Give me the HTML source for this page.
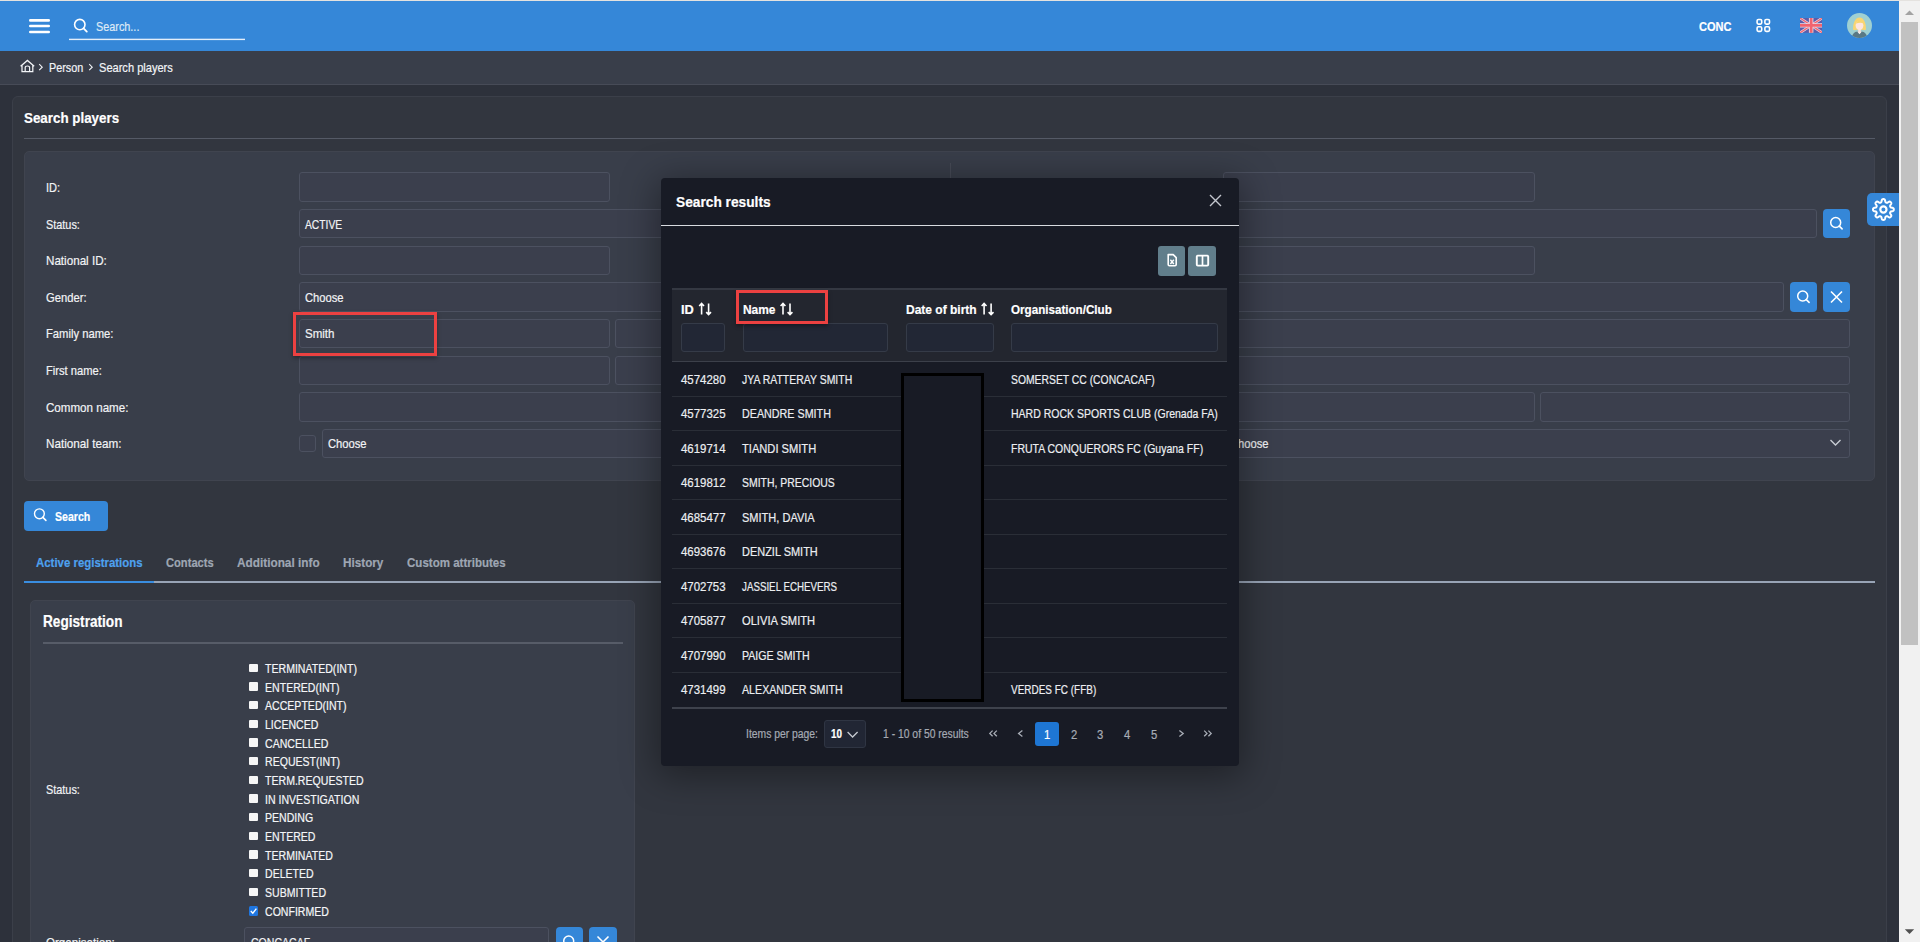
<!DOCTYPE html>
<html><head><meta charset="utf-8">
<style>
*{box-sizing:border-box;margin:0;padding:0}
html,body{width:1920px;height:942px;overflow:hidden;background:#2d313b;font-family:"Liberation Sans",sans-serif;color:#e6e8ec}
.a{position:absolute}
.t{position:absolute;white-space:nowrap;line-height:20px;transform-origin:0 0;-webkit-text-stroke:0.2px currentColor}
svg{position:absolute;overflow:visible}
.inp{position:absolute;height:29px;background:#3b3f4d;border:1px solid #4c5160;border-radius:3px}
.fin{position:absolute;background:#222735;border:1px solid #353b48;border-radius:3px}
.btn{position:absolute;background:#3587d8;border-radius:4px}
</style></head><body>
<div class="a" style="left:0px;top:0px;width:1920px;height:1px;background:#e4e2df"></div>
<div class="a" style="left:0px;top:1px;width:1899px;height:50px;background:#3587d8"></div>
<div class="a" style="left:0px;top:51px;width:1899px;height:34px;background:#393e4a;border-bottom:1px solid #474b57"></div>
<div class="a" style="left:12px;top:96px;width:1875px;height:900px;background:#32363f;border:1px solid #3b3f49;border-radius:6px"></div>
<div class="a" style="left:24px;top:138px;width:1851px;height:1px;background:#555a66"></div>
<div class="a" style="left:24px;top:151px;width:1851px;height:330px;background:#393e4a;border:1px solid #40444f;border-radius:5px"></div>
<div class="a" style="left:950px;top:163px;width:1px;height:300px;background:#474b57"></div>
<svg style="left:0;top:0" width="1" height="1"><g stroke="#fff" stroke-width="2.6" stroke-linecap="round"><line x1="30.3" y1="20.4" x2="48.7" y2="20.4"/><line x1="30.3" y1="26" x2="48.7" y2="26"/><line x1="30.3" y1="32" x2="48.7" y2="32"/></g><circle cx="79.8" cy="24.6" r="5.2" fill="none" stroke="#fff" stroke-width="1.6"/><line x1="83.6" y1="28.4" x2="86.8" y2="31.6" stroke="#fff" stroke-width="1.8" stroke-linecap="round"/><rect x="69" y="38.7" width="176" height="1.4" fill="#e3eefa"/><g fill="none" stroke="#fff" stroke-width="1.6"><rect x="1757.1" y="19.5" width="4.6" height="4.6" rx="1.3"/><rect x="1764.9" y="19.5" width="4.6" height="4.6" rx="1.3"/><rect x="1757.1" y="26.8" width="4.6" height="4.6" rx="1.3"/><rect x="1764.9" y="26.8" width="4.6" height="4.6" rx="1.3"/></g></svg>
<div class="t" style="left:95.5px;top:17.10px;font-size:13px;color:#dde9f6;transform:scaleX(0.8341);">Search...</div>
<div class="t" style="left:1698.8px;top:17.20px;font-size:13px;font-weight:700;color:#ffffff;transform:scaleX(0.8490);">CONC</div>
<svg style="left:1800.2px;top:18.1px;overflow:hidden" width="22.3" height="14.8" viewBox="0 0 60 40" preserveAspectRatio="none"><rect width="60" height="40" fill="#5a5daa"/><path d="M0,0 L60,40 M60,0 L0,40" stroke="#e9d9e6" stroke-width="7"/><path d="M0,0 L60,40 M60,0 L0,40" stroke="#f0646f" stroke-width="3.4"/><path d="M30,0 V40 M0,20 H60" stroke="#eedde6" stroke-width="12"/><path d="M30,0 V40 M0,20 H60" stroke="#f2636e" stroke-width="7.5"/></svg>
<svg style="left:1847px;top:13px;overflow:hidden" width="25" height="25" viewBox="0 0 25 25"><circle cx="12.5" cy="12.5" r="12.5" fill="#9fd0d2"/><defs><clipPath id="av"><circle cx="12.5" cy="12.5" r="12.5"/></clipPath></defs><g clip-path="url(#av)"><path d="M4.6,26 Q5,19.2 10.5,18.6 L14.5,18.6 Q20,19.2 20.4,26 Z" fill="#5a7985"/><path d="M10.2,18.6 L12.5,21.2 L14.8,18.6 Z" fill="#f7f7f7"/><rect x="11.2" y="15.5" width="2.6" height="4" fill="#fbe0da"/><path d="M6,16.6 Q5.8,12 7.2,9 Q9.2,4.6 12.5,4.6 Q15.8,4.6 17.8,9 Q19.2,12 19,16.6 Q17.6,17.8 16.2,16.8 L8.8,16.8 Q7.4,17.8 6,16.6 Z" fill="#f8d572"/><ellipse cx="12.5" cy="12.6" rx="3.9" ry="4.6" fill="#fde5e0"/><path d="M8.4,10.8 Q10,7.2 13.6,7.4 Q16,8 16.8,10.8 Q14,8.8 8.4,10.8 Z" fill="#f8d572"/></g></svg>
<svg style="left:0;top:0" width="1" height="1"><path d="M20.6,66.2 L27.4,60.4 L34.2,66.2 M22,65.2 V71.7 H32.8 V65.2" fill="none" stroke="#f2f4f7" stroke-width="1.25" stroke-linejoin="miter"/><path d="M25.2,71.7 V67.6 Q25.2,66 27.4,66 Q29.6,66 29.6,67.6 V71.7" fill="none" stroke="#f2f4f7" stroke-width="1.2"/><path d="M39.2,64.2 L42.2,67.2 L39.2,70.2" fill="none" stroke="#eef0f4" stroke-width="1.15"/><path d="M89.2,64.2 L92.2,67.2 L89.2,70.2" fill="none" stroke="#eef0f4" stroke-width="1.15"/></svg>
<div class="t" style="left:49.0px;top:58.30px;font-size:13px;color:#f2f4f7;transform:scaleX(0.8325);">Person</div>
<div class="t" style="left:98.7px;top:58.30px;font-size:13px;color:#f2f4f7;transform:scaleX(0.8510);">Search players</div>
<div class="t" style="left:24.3px;top:108.20px;font-size:15px;font-weight:700;color:#ffffff;transform:scaleX(0.8909);">Search players</div>
<div class="t" style="left:45.8px;top:177.90px;font-size:13px;color:#f2f3f5;transform:scaleX(0.8481);">ID:</div>
<div class="t" style="left:45.8px;top:214.80px;font-size:13px;color:#f2f3f5;transform:scaleX(0.8377);">Status:</div>
<div class="t" style="left:45.8px;top:251.00px;font-size:13px;color:#f2f3f5;transform:scaleX(0.8951);">National ID:</div>
<div class="t" style="left:45.8px;top:287.80px;font-size:13px;color:#f2f3f5;transform:scaleX(0.8620);">Gender:</div>
<div class="t" style="left:45.8px;top:324.00px;font-size:13px;color:#f2f3f5;transform:scaleX(0.8638);">Family name:</div>
<div class="t" style="left:45.8px;top:360.80px;font-size:13px;color:#f2f3f5;transform:scaleX(0.8583);">First name:</div>
<div class="t" style="left:45.8px;top:397.50px;font-size:13px;color:#f2f3f5;transform:scaleX(0.8910);">Common name:</div>
<div class="t" style="left:45.8px;top:434.20px;font-size:13px;color:#f2f3f5;transform:scaleX(0.8995);">National team:</div>
<div class="inp" style="left:299px;top:172px;width:311px;height:30px"></div>
<div class="inp" style="left:1222.5px;top:172px;width:312.0px;height:30px"></div>
<div class="inp" style="left:299px;top:209px;width:1518px;height:29px"></div>
<div class="inp" style="left:299px;top:245.5px;width:311px;height:29.0px"></div>
<div class="inp" style="left:1222.5px;top:245.5px;width:312.0px;height:29.0px"></div>
<div class="inp" style="left:299px;top:282px;width:1485px;height:29.5px"></div>
<div class="inp" style="left:299px;top:319px;width:311px;height:29px"></div>
<div class="inp" style="left:615px;top:319px;width:311px;height:29px"></div>
<div class="inp" style="left:1222.5px;top:319px;width:627.5px;height:29px"></div>
<div class="inp" style="left:299px;top:355.5px;width:311px;height:29.0px"></div>
<div class="inp" style="left:615px;top:355.5px;width:311px;height:29.0px"></div>
<div class="inp" style="left:1222.5px;top:355.5px;width:627.5px;height:29.0px"></div>
<div class="inp" style="left:299px;top:392px;width:627px;height:29.5px"></div>
<div class="inp" style="left:1222.5px;top:392px;width:312.0px;height:29.5px"></div>
<div class="inp" style="left:1540px;top:392px;width:310px;height:29.5px"></div>
<div class="inp" style="left:299px;top:435px;width:17px;height:17px;border-radius:3px"></div>
<div class="inp" style="left:322px;top:429px;width:604px;height:29px"></div>
<div class="inp" style="left:1222.5px;top:429px;width:627.5px;height:29px"></div>
<div class="t" style="left:305.3px;top:214.80px;font-size:13px;color:#f2f3f5;transform:scaleX(0.7920);">ACTIVE</div>
<div class="t" style="left:305.3px;top:287.80px;font-size:13px;color:#f2f3f5;transform:scaleX(0.8614);">Choose</div>
<div class="t" style="left:305.4px;top:323.80px;font-size:13px;color:#f2f3f5;transform:scaleX(0.8876);">Smith</div>
<div class="t" style="left:328.3px;top:434.40px;font-size:13px;color:#f2f3f5;transform:scaleX(0.8614);">Choose</div>
<div class="t" style="left:1229.5px;top:434.40px;font-size:13px;color:#f2f3f5;transform:scaleX(0.8614);">Choose</div>
<svg style="left:0;top:0" width="1" height="1"><path d="M1830.5,440 L1835.5,445 L1840.5,440" fill="none" stroke="#c8ccd3" stroke-width="1.4"/></svg>
<div class="a" style="left:293px;top:312px;width:144px;height:44px;border:3px solid #ec4141;box-shadow:0 2px 4px rgba(0,0,0,.35)"></div>
<div class="btn" style="left:1823px;top:209px;width:27px;height:29px"></div><svg style="left:0;top:0" width="1" height="1"><circle cx="1835.7" cy="222.5" r="5" fill="none" stroke="#fff" stroke-width="1.5"/><line x1="1839.3" y1="226.1" x2="1842.1" y2="228.9" stroke="#fff" stroke-width="1.6" stroke-linecap="round"/></svg>
<div class="btn" style="left:1790px;top:282px;width:27px;height:30px"></div><svg style="left:0;top:0" width="1" height="1"><circle cx="1802.7" cy="296.0" r="5" fill="none" stroke="#fff" stroke-width="1.5"/><line x1="1806.3" y1="299.6" x2="1809.1" y2="302.4" stroke="#fff" stroke-width="1.6" stroke-linecap="round"/></svg>
<div class="btn" style="left:1823px;top:282px;width:27px;height:30px"></div><svg style="left:0;top:0" width="1" height="1"><path d="M1831.0,291.5 L1842.0,302.5 M1842.0,291.5 L1831.0,302.5" stroke="#fff" stroke-width="1.6"/></svg>
<div class="a" style="left:1867px;top:193px;width:40px;height:33px;background:#3587d8;border-radius:5px 0 0 5px"></div>
<svg style="left:0;top:0" width="1" height="1"><path d="M1883.40,199.10 L1883.67,199.11 L1883.94,199.15 L1884.21,199.23 L1884.46,199.37 L1884.70,199.60 L1884.91,199.97 L1885.07,200.48 L1885.19,201.06 L1885.30,201.57 L1885.42,201.95 L1885.56,202.20 L1885.72,202.37 L1885.88,202.49 L1886.06,202.58 L1886.23,202.66 L1886.41,202.73 L1886.60,202.79 L1886.80,202.82 L1887.03,202.81 L1887.31,202.73 L1887.66,202.55 L1888.10,202.26 L1888.59,201.94 L1889.07,201.70 L1889.48,201.58 L1889.81,201.58 L1890.09,201.67 L1890.33,201.80 L1890.55,201.96 L1890.75,202.15 L1890.94,202.35 L1891.10,202.57 L1891.23,202.81 L1891.32,203.09 L1891.32,203.42 L1891.20,203.83 L1890.96,204.31 L1890.64,204.80 L1890.35,205.24 L1890.17,205.59 L1890.09,205.87 L1890.08,206.10 L1890.11,206.30 L1890.17,206.49 L1890.24,206.67 L1890.32,206.84 L1890.41,207.02 L1890.53,207.18 L1890.70,207.34 L1890.95,207.48 L1891.33,207.60 L1891.84,207.71 L1892.42,207.83 L1892.93,207.99 L1893.30,208.20 L1893.53,208.44 L1893.67,208.69 L1893.75,208.96 L1893.79,209.23 L1893.80,209.50 L1893.79,209.77 L1893.75,210.04 L1893.67,210.31 L1893.53,210.56 L1893.30,210.80 L1892.93,211.01 L1892.42,211.17 L1891.84,211.29 L1891.33,211.40 L1890.95,211.52 L1890.70,211.66 L1890.53,211.82 L1890.41,211.98 L1890.32,212.16 L1890.24,212.33 L1890.17,212.51 L1890.11,212.70 L1890.08,212.90 L1890.09,213.13 L1890.17,213.41 L1890.35,213.76 L1890.64,214.20 L1890.96,214.69 L1891.20,215.17 L1891.32,215.58 L1891.32,215.91 L1891.23,216.19 L1891.10,216.43 L1890.94,216.65 L1890.75,216.85 L1890.55,217.04 L1890.33,217.20 L1890.09,217.33 L1889.81,217.42 L1889.48,217.42 L1889.07,217.30 L1888.59,217.06 L1888.10,216.74 L1887.66,216.45 L1887.31,216.27 L1887.03,216.19 L1886.80,216.18 L1886.60,216.21 L1886.41,216.27 L1886.23,216.34 L1886.06,216.42 L1885.88,216.51 L1885.72,216.63 L1885.56,216.80 L1885.42,217.05 L1885.30,217.43 L1885.19,217.94 L1885.07,218.52 L1884.91,219.03 L1884.70,219.40 L1884.46,219.63 L1884.21,219.77 L1883.94,219.85 L1883.67,219.89 L1883.40,219.90 L1883.13,219.89 L1882.86,219.85 L1882.59,219.77 L1882.34,219.63 L1882.10,219.40 L1881.89,219.03 L1881.73,218.52 L1881.61,217.94 L1881.50,217.43 L1881.38,217.05 L1881.24,216.80 L1881.08,216.63 L1880.92,216.51 L1880.74,216.42 L1880.57,216.34 L1880.39,216.27 L1880.20,216.21 L1880.00,216.18 L1879.77,216.19 L1879.49,216.27 L1879.14,216.45 L1878.70,216.74 L1878.21,217.06 L1877.73,217.30 L1877.32,217.42 L1876.99,217.42 L1876.71,217.33 L1876.47,217.20 L1876.25,217.04 L1876.05,216.85 L1875.86,216.65 L1875.70,216.43 L1875.57,216.19 L1875.48,215.91 L1875.48,215.58 L1875.60,215.17 L1875.84,214.69 L1876.16,214.20 L1876.45,213.76 L1876.63,213.41 L1876.71,213.13 L1876.72,212.90 L1876.69,212.70 L1876.63,212.51 L1876.56,212.33 L1876.48,212.16 L1876.39,211.98 L1876.27,211.82 L1876.10,211.66 L1875.85,211.52 L1875.47,211.40 L1874.96,211.29 L1874.38,211.17 L1873.87,211.01 L1873.50,210.80 L1873.27,210.56 L1873.13,210.31 L1873.05,210.04 L1873.01,209.77 L1873.00,209.50 L1873.01,209.23 L1873.05,208.96 L1873.13,208.69 L1873.27,208.44 L1873.50,208.20 L1873.87,207.99 L1874.38,207.83 L1874.96,207.71 L1875.47,207.60 L1875.85,207.48 L1876.10,207.34 L1876.27,207.18 L1876.39,207.02 L1876.48,206.84 L1876.56,206.67 L1876.63,206.49 L1876.69,206.30 L1876.72,206.10 L1876.71,205.87 L1876.63,205.59 L1876.45,205.24 L1876.16,204.80 L1875.84,204.31 L1875.60,203.83 L1875.48,203.42 L1875.48,203.09 L1875.57,202.81 L1875.70,202.57 L1875.86,202.35 L1876.05,202.15 L1876.25,201.96 L1876.47,201.80 L1876.71,201.67 L1876.99,201.58 L1877.32,201.58 L1877.73,201.70 L1878.21,201.94 L1878.70,202.26 L1879.14,202.55 L1879.49,202.73 L1879.77,202.81 L1880.00,202.82 L1880.20,202.79 L1880.39,202.73 L1880.57,202.66 L1880.74,202.58 L1880.92,202.49 L1881.08,202.37 L1881.24,202.20 L1881.38,201.95 L1881.50,201.57 L1881.61,201.06 L1881.73,200.48 L1881.89,199.97 L1882.10,199.60 L1882.34,199.37 L1882.59,199.23 L1882.86,199.15 L1883.13,199.11 Z" fill="none" stroke="#fff" stroke-width="2"/><circle cx="1883.4" cy="209.5" r="3.1" fill="none" stroke="#fff" stroke-width="2.2"/></svg>
<div class="btn" style="left:24px;top:501px;width:84px;height:30px;border-radius:4px"></div>
<svg style="left:0;top:0" width="1" height="1"><circle cx="39.4" cy="513.8" r="4.9" fill="none" stroke="#fff" stroke-width="1.4"/><line x1="42.9" y1="517.4" x2="45.9" y2="520.4" stroke="#fff" stroke-width="1.6" stroke-linecap="round"/></svg>
<div class="t" style="left:54.6px;top:507.25px;font-size:13px;font-weight:700;color:#ffffff;transform:scaleX(0.8115);">Search</div>
<div class="t" style="left:36.1px;top:552.50px;font-size:13.5px;font-weight:700;color:#4ea1ee;transform:scaleX(0.8457);">Active registrations</div>
<div class="t" style="left:165.8px;top:552.50px;font-size:13.5px;font-weight:700;color:#9ea6b3;transform:scaleX(0.8258);">Contacts</div>
<div class="t" style="left:236.9px;top:552.50px;font-size:13.5px;font-weight:700;color:#9ea6b3;transform:scaleX(0.8742);">Additional info</div>
<div class="t" style="left:342.9px;top:552.50px;font-size:13.5px;font-weight:700;color:#9ea6b3;transform:scaleX(0.8685);">History</div>
<div class="t" style="left:406.5px;top:552.50px;font-size:13.5px;font-weight:700;color:#9ea6b3;transform:scaleX(0.8544);">Custom attributes</div>
<div class="a" style="left:24px;top:580.8px;width:1851px;height:2.2px;background:#98a4b6"></div>
<div class="a" style="left:24px;top:580.6px;width:130px;height:2.5px;background:#3a8ee0"></div>
<div class="a" style="left:30px;top:600px;width:605px;height:400px;background:#393e4a;border:1px solid #40444f;border-radius:5px"></div>
<div class="t" style="left:43.4px;top:612.20px;font-size:16px;font-weight:700;color:#ffffff;transform:scaleX(0.8517);">Registration</div>
<div class="a" style="left:43px;top:642px;width:580px;height:1.5px;background:#575c68"></div>
<div class="t" style="left:45.6px;top:779.60px;font-size:13px;color:#f2f3f5;transform:scaleX(0.8377);">Status:</div>
<div class="a" style="left:249px;top:663.50px;width:9.2px;height:8.6px;background:#f6f6f6;border-radius:1px"></div>
<div class="t" style="left:265.4px;top:659.10px;font-size:12.5px;color:#f5f6f8;transform:scaleX(0.8450);">TERMINATED(INT)</div>
<div class="a" style="left:249px;top:682.17px;width:9.2px;height:8.6px;background:#f6f6f6;border-radius:1px"></div>
<div class="t" style="left:265.4px;top:677.77px;font-size:12.5px;color:#f5f6f8;transform:scaleX(0.8450);">ENTERED(INT)</div>
<div class="a" style="left:249px;top:700.84px;width:9.2px;height:8.6px;background:#f6f6f6;border-radius:1px"></div>
<div class="t" style="left:265.4px;top:696.44px;font-size:12.5px;color:#f5f6f8;transform:scaleX(0.8450);">ACCEPTED(INT)</div>
<div class="a" style="left:249px;top:719.51px;width:9.2px;height:8.6px;background:#f6f6f6;border-radius:1px"></div>
<div class="t" style="left:265.4px;top:715.11px;font-size:12.5px;color:#f5f6f8;transform:scaleX(0.8450);">LICENCED</div>
<div class="a" style="left:249px;top:738.18px;width:9.2px;height:8.6px;background:#f6f6f6;border-radius:1px"></div>
<div class="t" style="left:265.4px;top:733.78px;font-size:12.5px;color:#f5f6f8;transform:scaleX(0.8450);">CANCELLED</div>
<div class="a" style="left:249px;top:756.85px;width:9.2px;height:8.6px;background:#f6f6f6;border-radius:1px"></div>
<div class="t" style="left:265.4px;top:752.45px;font-size:12.5px;color:#f5f6f8;transform:scaleX(0.8450);">REQUEST(INT)</div>
<div class="a" style="left:249px;top:775.52px;width:9.2px;height:8.6px;background:#f6f6f6;border-radius:1px"></div>
<div class="t" style="left:265.4px;top:771.12px;font-size:12.5px;color:#f5f6f8;transform:scaleX(0.8450);">TERM.REQUESTED</div>
<div class="a" style="left:249px;top:794.19px;width:9.2px;height:8.6px;background:#f6f6f6;border-radius:1px"></div>
<div class="t" style="left:265.4px;top:789.79px;font-size:12.5px;color:#f5f6f8;transform:scaleX(0.8450);">IN INVESTIGATION</div>
<div class="a" style="left:249px;top:812.86px;width:9.2px;height:8.6px;background:#f6f6f6;border-radius:1px"></div>
<div class="t" style="left:265.4px;top:808.46px;font-size:12.5px;color:#f5f6f8;transform:scaleX(0.8450);">PENDING</div>
<div class="a" style="left:249px;top:831.53px;width:9.2px;height:8.6px;background:#f6f6f6;border-radius:1px"></div>
<div class="t" style="left:265.4px;top:827.13px;font-size:12.5px;color:#f5f6f8;transform:scaleX(0.8450);">ENTERED</div>
<div class="a" style="left:249px;top:850.20px;width:9.2px;height:8.6px;background:#f6f6f6;border-radius:1px"></div>
<div class="t" style="left:265.4px;top:845.80px;font-size:12.5px;color:#f5f6f8;transform:scaleX(0.8450);">TERMINATED</div>
<div class="a" style="left:249px;top:868.87px;width:9.2px;height:8.6px;background:#f6f6f6;border-radius:1px"></div>
<div class="t" style="left:265.4px;top:864.47px;font-size:12.5px;color:#f5f6f8;transform:scaleX(0.8450);">DELETED</div>
<div class="a" style="left:249px;top:887.54px;width:9.2px;height:8.6px;background:#f6f6f6;border-radius:1px"></div>
<div class="t" style="left:265.4px;top:883.14px;font-size:12.5px;color:#f5f6f8;transform:scaleX(0.8450);">SUBMITTED</div>
<div class="a" style="left:248.8px;top:906.21px;width:9.4px;height:9.4px;background:#1f76e0;border-radius:1.5px"></div><svg style="left:0;top:0" width="1" height="1"><path d="M250.8,911.01 L252.8,913.11 L256.4,908.61" fill="none" stroke="#fff" stroke-width="1.4"/></svg>
<div class="t" style="left:265.4px;top:901.81px;font-size:12.5px;color:#f5f6f8;transform:scaleX(0.8450);">CONFIRMED</div>
<div class="t" style="left:45.9px;top:932.60px;font-size:13px;color:#f2f3f5;transform:scaleX(0.8900);">Organisation:</div>
<div class="inp" style="left:244.4px;top:927.4px;width:305px;height:29px"></div>
<div class="t" style="left:250.8px;top:932.60px;font-size:13px;color:#f2f3f5;transform:scaleX(0.8100);">CONCACAF</div>
<div class="btn" style="left:556px;top:927px;width:27px;height:30px"></div><svg style="left:0;top:0" width="1" height="1"><circle cx="568.7" cy="941.0" r="5" fill="none" stroke="#fff" stroke-width="1.5"/><line x1="572.3" y1="944.6" x2="575.1" y2="947.4" stroke="#fff" stroke-width="1.6" stroke-linecap="round"/></svg>
<div class="btn" style="left:589px;top:927px;width:28px;height:30px"></div><svg style="left:0;top:0" width="1" height="1"><path d="M597.5,936.5 L608.5,947.5 M608.5,936.5 L597.5,947.5" stroke="#fff" stroke-width="1.6"/></svg>
<div class="a" style="left:661px;top:178px;width:578px;height:588px;background:#181b25;border-radius:4px;box-shadow:0 6px 36px 4px rgba(0,0,0,.38)"></div>
<div class="t" style="left:676.4px;top:191.70px;font-size:15px;font-weight:700;color:#ffffff;transform:scaleX(0.9150);">Search results</div>
<svg style="left:0;top:0" width="1" height="1"><path d="M1210,195 L1221,206 M1221,195 L1210,206" stroke="#c3c7ce" stroke-width="1.4"/></svg>
<div class="a" style="left:661px;top:224.8px;width:578px;height:1.6px;background:#d8dbe0"></div>
<div class="a" style="left:1158px;top:246px;width:27px;height:30px;background:#617e8b;border-radius:3px"></div>
<div class="a" style="left:1188px;top:246px;width:28px;height:30px;background:#617e8b;border-radius:3px"></div>
<svg style="left:0;top:0" width="1" height="1"><path d="M1168.2,254.6 H1173.2 L1176.2,257.6 V264.6 Q1176.2,265.8 1175,265.8 H1169.4 Q1168.2,265.8 1168.2,264.6 Z" fill="none" stroke="#fff" stroke-width="1.6" stroke-linejoin="round"/><path d="M1170.4,259.8 L1173.8,264 M1173.8,259.8 L1170.4,264" stroke="#fff" stroke-width="1.4"/><rect x="1196.8" y="255.6" width="11.4" height="10" rx="1" fill="none" stroke="#fff" stroke-width="1.9"/><line x1="1202.5" y1="255.6" x2="1202.5" y2="265.6" stroke="#fff" stroke-width="1.7"/></svg>
<div class="a" style="left:672px;top:288px;width:555px;height:74px;background:#23262f;border-top:2px solid #343842;border-bottom:1.5px solid #3c404a"></div>
<div class="t" style="left:681.0px;top:300.10px;font-size:13px;font-weight:700;color:#ffffff;transform:scaleX(0.9846);">ID</div>
<div class="t" style="left:742.8px;top:300.10px;font-size:13px;font-weight:700;color:#ffffff;transform:scaleX(0.9175);">Name</div>
<div class="t" style="left:905.7px;top:300.10px;font-size:13px;font-weight:700;color:#ffffff;transform:scaleX(0.9234);">Date of birth</div>
<div class="t" style="left:1011.0px;top:300.10px;font-size:13px;font-weight:700;color:#ffffff;transform:scaleX(0.8946);">Organisation/Club</div>
<svg style="left:0;top:0" width="1" height="1"><path d="M701.6,303.5 V314.6 M699.2,306 L701.6,303.5 L704,306" fill="none" stroke="#fff" stroke-width="1.6"/><path d="M708.6,303.5 V314.6 M706.2,312.1 L708.6,314.6 L711,312.1" fill="none" stroke="#fff" stroke-width="1.6"/><path d="M783.0,303.5 V314.6 M780.6,306 L783.0,303.5 L785.4,306" fill="none" stroke="#fff" stroke-width="1.6"/><path d="M790.0,303.5 V314.6 M787.6,312.1 L790.0,314.6 L792.4,312.1" fill="none" stroke="#fff" stroke-width="1.6"/><path d="M984.1,303.5 V314.6 M981.7,306 L984.1,303.5 L986.5,306" fill="none" stroke="#fff" stroke-width="1.6"/><path d="M991.1,303.5 V314.6 M988.7,312.1 L991.1,314.6 L993.5,312.1" fill="none" stroke="#fff" stroke-width="1.6"/></svg>
<div class="fin" style="left:681.3px;top:323px;width:43.3px;height:28.6px"></div>
<div class="fin" style="left:743px;top:323px;width:144.6px;height:28.6px"></div>
<div class="fin" style="left:906px;top:323px;width:87.6px;height:28.6px"></div>
<div class="fin" style="left:1011px;top:323px;width:206.5px;height:28.6px"></div>
<div class="a" style="left:736px;top:290.2px;width:92px;height:33.7px;border:3px solid #ec4141;box-shadow:0 2px 4px rgba(0,0,0,.35)"></div>
<div class="t" style="left:680.6px;top:370.00px;font-size:13px;color:#eceef1;transform:scaleX(0.8810);">4574280</div>
<div class="t" style="left:742.4px;top:370.00px;font-size:13px;color:#eceef1;transform:scaleX(0.8043);">JYA RATTERAY SMITH</div>
<div class="t" style="left:1011.2px;top:370.00px;font-size:13px;color:#eceef1;transform:scaleX(0.7969);">SOMERSET CC (CONCACAF)</div>
<div class="a" style="left:672px;top:396.0px;width:555px;height:1px;background:#2a2e37"></div>
<div class="t" style="left:680.6px;top:404.00px;font-size:13px;color:#eceef1;transform:scaleX(0.8810);">4577325</div>
<div class="t" style="left:742.4px;top:404.00px;font-size:13px;color:#eceef1;transform:scaleX(0.8260);">DEANDRE SMITH</div>
<div class="t" style="left:1011.2px;top:404.00px;font-size:13px;color:#eceef1;transform:scaleX(0.8090);">HARD ROCK SPORTS CLUB (Grenada FA)</div>
<div class="a" style="left:672px;top:430.45px;width:555px;height:1px;background:#2a2e37"></div>
<div class="t" style="left:680.6px;top:439.00px;font-size:13px;color:#eceef1;transform:scaleX(0.8810);">4619714</div>
<div class="t" style="left:742.4px;top:439.00px;font-size:13px;color:#eceef1;transform:scaleX(0.8561);">TIANDI SMITH</div>
<div class="t" style="left:1011.2px;top:439.00px;font-size:13px;color:#eceef1;transform:scaleX(0.8071);">FRUTA CONQUERORS FC (Guyana FF)</div>
<div class="a" style="left:672px;top:464.9px;width:555px;height:1px;background:#2a2e37"></div>
<div class="t" style="left:680.6px;top:473.00px;font-size:13px;color:#eceef1;transform:scaleX(0.8810);">4619812</div>
<div class="t" style="left:742.4px;top:473.00px;font-size:13px;color:#eceef1;transform:scaleX(0.8029);">SMITH, PRECIOUS</div>
<div class="a" style="left:672px;top:499.35px;width:555px;height:1px;background:#2a2e37"></div>
<div class="t" style="left:680.6px;top:508.00px;font-size:13px;color:#eceef1;transform:scaleX(0.8810);">4685477</div>
<div class="t" style="left:742.4px;top:508.00px;font-size:13px;color:#eceef1;transform:scaleX(0.8481);">SMITH, DAVIA</div>
<div class="a" style="left:672px;top:533.8px;width:555px;height:1px;background:#2a2e37"></div>
<div class="t" style="left:680.6px;top:542.00px;font-size:13px;color:#eceef1;transform:scaleX(0.8810);">4693676</div>
<div class="t" style="left:742.4px;top:542.00px;font-size:13px;color:#eceef1;transform:scaleX(0.8440);">DENZIL SMITH</div>
<div class="a" style="left:672px;top:568.25px;width:555px;height:1px;background:#2a2e37"></div>
<div class="t" style="left:680.6px;top:577.00px;font-size:13px;color:#eceef1;transform:scaleX(0.8810);">4702753</div>
<div class="t" style="left:742.4px;top:577.00px;font-size:13px;color:#eceef1;transform:scaleX(0.7507);">JASSIEL ECHEVERS</div>
<div class="a" style="left:672px;top:602.7px;width:555px;height:1px;background:#2a2e37"></div>
<div class="t" style="left:680.6px;top:611.00px;font-size:13px;color:#eceef1;transform:scaleX(0.8810);">4705877</div>
<div class="t" style="left:742.4px;top:611.00px;font-size:13px;color:#eceef1;transform:scaleX(0.8575);">OLIVIA SMITH</div>
<div class="a" style="left:672px;top:637.1500000000001px;width:555px;height:1px;background:#2a2e37"></div>
<div class="t" style="left:680.6px;top:646.00px;font-size:13px;color:#eceef1;transform:scaleX(0.8810);">4707990</div>
<div class="t" style="left:742.4px;top:646.00px;font-size:13px;color:#eceef1;transform:scaleX(0.8161);">PAIGE SMITH</div>
<div class="a" style="left:672px;top:671.6px;width:555px;height:1px;background:#2a2e37"></div>
<div class="t" style="left:680.6px;top:680.00px;font-size:13px;color:#eceef1;transform:scaleX(0.8810);">4731499</div>
<div class="t" style="left:742.4px;top:680.00px;font-size:13px;color:#eceef1;transform:scaleX(0.8191);">ALEXANDER SMITH</div>
<div class="t" style="left:1011.2px;top:680.00px;font-size:13px;color:#eceef1;transform:scaleX(0.7660);">VERDES FC (FFB)</div>
<div class="a" style="left:672px;top:706.8px;width:555px;height:2px;background:#3e424c"></div>
<div class="a" style="left:901px;top:373px;width:83px;height:329px;background:#181b25;border:3px solid #000"></div>
<div class="t" style="left:745.9px;top:724.20px;font-size:12px;color:#a5aab3;transform:scaleX(0.8634);">Items per page:</div>
<div class="fin" style="left:824.2px;top:720.2px;width:41.5px;height:27.4px;background:#212634;border-color:#2f3543"></div>
<div class="t" style="left:831.0px;top:724.20px;font-size:12px;font-weight:700;color:#ffffff;transform:scaleX(0.8234);">10</div>
<svg style="left:0;top:0" width="1" height="1"><path d="M847.6,732 L852.6,737 L857.6,732" fill="none" stroke="#c5c9d0" stroke-width="1.3"/></svg>
<div class="t" style="left:883.0px;top:724.20px;font-size:12px;color:#a5aab3;transform:scaleX(0.8633);">1 - 10 of 50 results</div>
<svg style="left:0;top:0" width="1" height="1"><g fill="none" stroke="#a8adb6" stroke-width="1.3"><path d="M992.6,730.6 L989.8,733.4 L992.6,736.2 M996.8,730.6 L994,733.4 L996.8,736.2"/><path d="M1022.4,730.4 L1018.6,733.4 L1022.4,736.4"/><path d="M1179.4,730.4 L1183.2,733.4 L1179.4,736.4"/><path d="M1204.2,730.6 L1207,733.4 L1204.2,736.2 M1208.4,730.6 L1211.2,733.4 L1208.4,736.2"/></g></svg>
<div class="a" style="left:1035px;top:722px;width:24px;height:24px;background:#1e76d3;border-radius:3px"></div>
<div class="t" style="left:1043.6px;top:725.30px;font-size:12.5px;color:#ffffff;transform:scaleX(0.9000);">1</div>
<div class="t" style="left:1070.5px;top:725.30px;font-size:12.5px;color:#a8adb6;transform:scaleX(0.9000);">2</div>
<div class="t" style="left:1097.3px;top:725.30px;font-size:12.5px;color:#a8adb6;transform:scaleX(0.9000);">3</div>
<div class="t" style="left:1123.5px;top:725.30px;font-size:12.5px;color:#a8adb6;transform:scaleX(0.9000);">4</div>
<div class="t" style="left:1150.9px;top:725.30px;font-size:12.5px;color:#a8adb6;transform:scaleX(0.9000);">5</div>
<div class="a" style="left:1899px;top:1px;width:21px;height:941px;background:#f1f1f1"></div>
<div class="a" style="left:1901px;top:22px;width:17px;height:623px;background:#c1c1c1"></div>
<svg style="left:0;top:0" width="1" height="1"><path d="M1905,15 L1909.5,10.5 L1914,15 Z" fill="#a3a3a3"/><path d="M1904.8,929.2 L1909.5,934 L1914.2,929.2 Z" fill="#505050"/></svg>
</body></html>
